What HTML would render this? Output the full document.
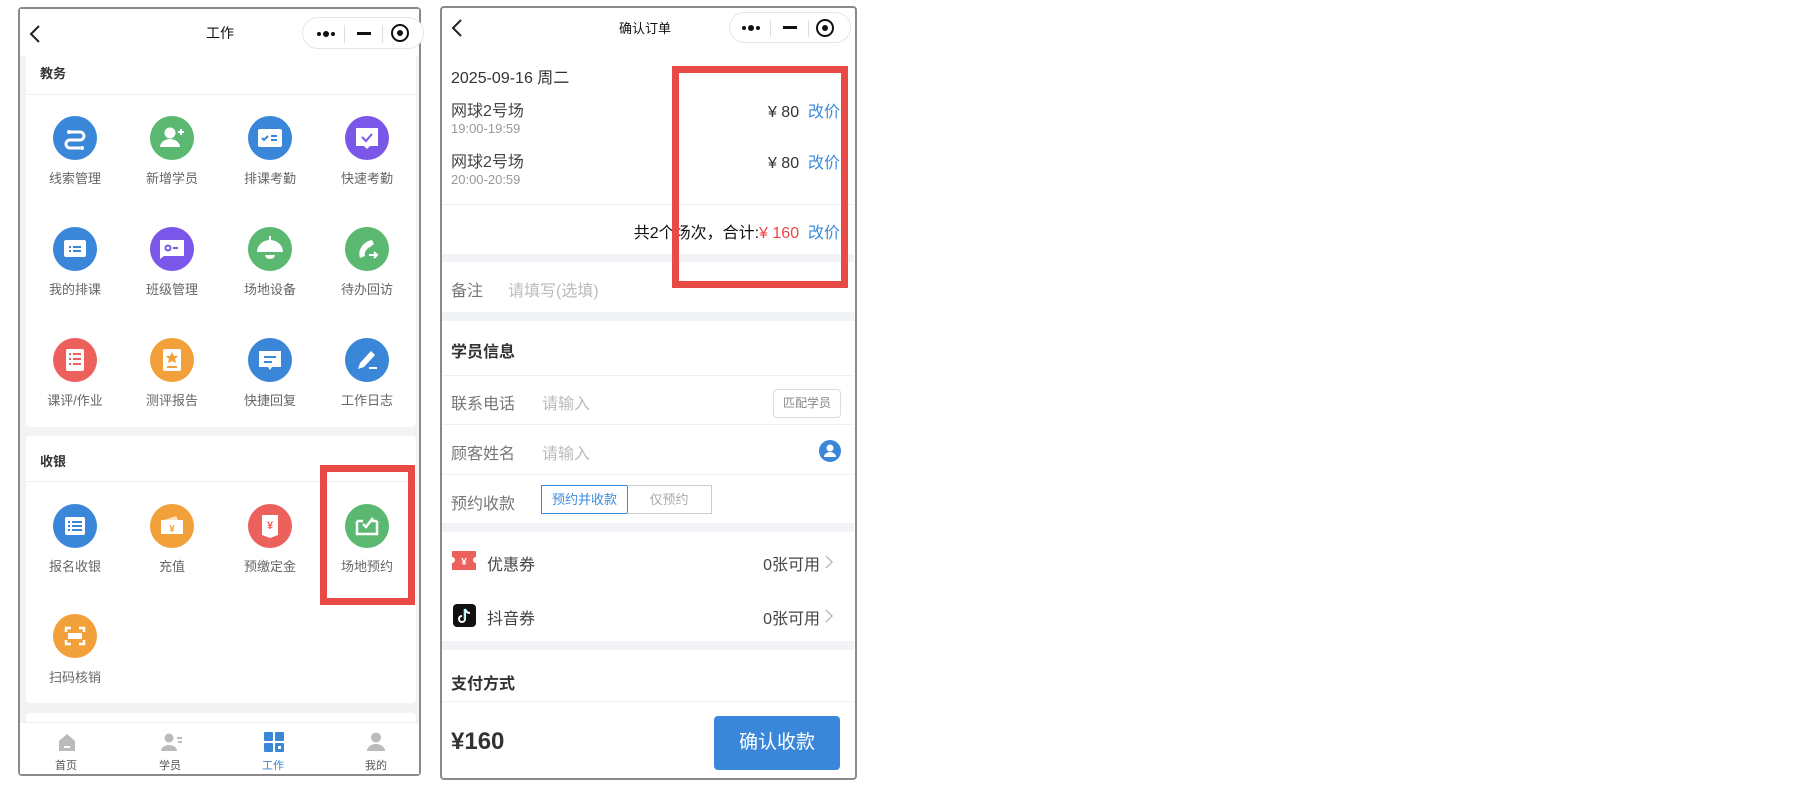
<!DOCTYPE html>
<html><head><meta charset="utf-8"><style>
*{margin:0;padding:0;box-sizing:border-box}
body{width:1820px;height:792px;background:#fff;position:relative;overflow:hidden;font-family:"Liberation Sans","Noto Sans CJK SC",sans-serif;color:#333}
.a{position:absolute}
.ph{position:absolute;border:2px solid #8a8a8a;border-radius:4px;background:#fff;overflow:hidden}
.cap{position:absolute;border:1px solid #e6e6e6;border-radius:16px;background:#fff}
.cap .d{position:absolute;top:13px;width:5px;height:5px;border-radius:50%;background:#111}
.lbl{position:absolute;width:96px;text-align:center;font-size:13px;color:#666;line-height:16px}
.ic{position:absolute;width:44px;height:44px;border-radius:50%}
.ic svg{position:absolute;left:0;top:0}
.row{position:absolute;left:451px;font-size:16px;color:#666}
.ln{position:absolute;left:442px;width:412px;height:1px;background:#f0f0f0}
.band{position:absolute;left:442px;width:412px;background:#f2f3f7}
.blue{color:#3b8bdb}
</style></head><body>

<!-- LEFT PHONE -->
<div class="ph" style="left:18px;top:7px;width:403px;height:769px;background:#f3f3f3">
</div>
<div class="a" style="left:20px;top:9px;width:399px;height:47px;background:#fff"></div>
<svg class="a" style="left:28px;top:24px" width="14" height="20"><path d="M11 2 L3 10 L11 18" stroke="#222" stroke-width="2" fill="none"/></svg>
<div class="a" style="left:190px;top:23px;width:60px;font-size:14px;color:#111;text-align:center">工作</div>
<div class="cap" style="left:302px;top:17px;width:122px;height:32px">
 <div class="d" style="left:14px;width:4px;height:4px;top:14px"></div><div class="d" style="left:20px;width:6px;height:6px;top:13px"></div><div class="d" style="left:28px;width:4px;height:4px;top:14px"></div>
 <div class="a" style="left:41px;top:7px;width:1px;height:18px;background:#ddd"></div>
 <div class="a" style="left:54px;top:14px;width:14px;height:3px;background:#111"></div>
 <div class="a" style="left:79px;top:7px;width:1px;height:18px;background:#ddd"></div>
 <div class="a" style="left:88px;top:6px;width:18px;height:18px;border:2px solid #111;border-radius:50%"></div>
 <div class="a" style="left:94px;top:12px;width:6px;height:6px;background:#111;border-radius:50%"></div>
</div>

<!-- card 1 -->
<div class="a" style="left:26px;top:56px;width:390px;height:371px;background:#fff;border-radius:0 0 4px 4px"></div>
<div class="a" style="left:40px;top:63px;font-size:13px;font-weight:bold;color:#333">教务</div>
<div class="a" style="left:26px;top:94px;width:390px;height:1px;background:#f0f0f0"></div>

<!-- icons row1 -->
<div class="ic" style="left:53px;top:116px;background:#3a86d8"><svg width="44" height="44"><path d="M17 16 H27 a4 4 0 0 1 0 8 H17 a4 4 0 0 0 0 8 H27" stroke="#fff" stroke-width="3" fill="none"/><circle cx="16" cy="16" r="2" fill="#fff"/><circle cx="29" cy="32" r="2" fill="#fff"/></svg></div>
<div class="ic" style="left:150px;top:116px;background:#5bb870"><svg width="44" height="44"><circle cx="20" cy="17" r="5.5" fill="#fff"/><path d="M10 31 a10 8 0 0 1 20 0 Z" fill="#fff"/><path d="M31 13 v6 M28 16 h6" stroke="#fff" stroke-width="2"/></svg></div>
<div class="ic" style="left:248px;top:116px;background:#3a86d8"><svg width="44" height="44"><rect x="10" y="13" width="24" height="18" rx="2" fill="#fff"/><path d="M14 22 l2 2 l4 -4" stroke="#3a86d8" stroke-width="2" fill="none"/><path d="M23 20 h6 M23 24 h6" stroke="#3a86d8" stroke-width="2"/></svg></div>
<div class="ic" style="left:345px;top:116px;background:#7a57e8"><svg width="44" height="44"><path d="M11 12 h22 v18 h-8 l-3 3 l-3 -3 h-8Z" fill="#fff"/><path d="M17 21 l4 4 l6 -7" stroke="#7a57e8" stroke-width="2" fill="none"/></svg></div>
<div class="lbl" style="left:27px;top:171px">线索管理</div>
<div class="lbl" style="left:124px;top:171px">新增学员</div>
<div class="lbl" style="left:222px;top:171px">排课考勤</div>
<div class="lbl" style="left:319px;top:171px">快速考勤</div>

<!-- row2 -->
<div class="ic" style="left:53px;top:227px;background:#3a86d8"><svg width="44" height="44"><rect x="11" y="13" width="22" height="17" rx="2" fill="#fff"/><path d="M16 20 h2 M20 20 h8 M16 24 h2 M20 24 h8" stroke="#3a86d8" stroke-width="2"/></svg></div>
<div class="ic" style="left:150px;top:227px;background:#7a57e8"><svg width="44" height="44"><path d="M10 13 h24 v16 h-20 l-4 3Z" fill="#fff"/><circle cx="18" cy="21" r="2.5" stroke="#7a57e8" stroke-width="2" fill="none"/><path d="M23 21 h5" stroke="#7a57e8" stroke-width="2"/></svg></div>
<div class="ic" style="left:248px;top:227px;background:#5bb870"><svg width="44" height="44"><path d="M9 25 a13 12 0 0 1 26 0Z" fill="#fff"/><rect x="21" y="9" width="2" height="5" fill="#fff"/><path d="M17 28 a5 4 0 0 0 10 0Z" fill="#fff"/></svg></div>
<div class="ic" style="left:345px;top:227px;background:#5bb870"><svg width="44" height="44"><path d="M15 31 c-3 -8 4 -17 12 -18 l2 4 l-4 3 c-4 2 -6 6 -5 9Z" fill="#fff"/><path d="M24 28 h8 M29 25 l3 3 l-3 3" stroke="#fff" stroke-width="2" fill="none"/></svg></div>
<div class="lbl" style="left:27px;top:282px">我的排课</div>
<div class="lbl" style="left:124px;top:282px">班级管理</div>
<div class="lbl" style="left:222px;top:282px">场地设备</div>
<div class="lbl" style="left:319px;top:282px">待办回访</div>

<!-- row3 -->
<div class="ic" style="left:53px;top:338px;background:#ec615b"><svg width="44" height="44"><rect x="13" y="11" width="18" height="22" rx="2" fill="#fff"/><path d="M16 16 h2 M20 16 h8 M16 21 h2 M20 21 h8 M16 26 h2 M20 26 h8" stroke="#ec615b" stroke-width="2"/></svg></div>
<div class="ic" style="left:150px;top:338px;background:#f2a03a"><svg width="44" height="44"><rect x="13" y="11" width="18" height="22" rx="2" fill="#fff"/><path d="M22 14 l2 4 h4 l-3 3 l1 4 l-4 -2 l-4 2 l1 -4 l-3 -3 h4Z" fill="#f2a03a"/><path d="M17 29 h10" stroke="#f2a03a" stroke-width="2"/></svg></div>
<div class="ic" style="left:248px;top:338px;background:#3a86d8"><svg width="44" height="44"><path d="M11 13 h22 v16 h-9 l-2 3 l-2 -3 h-9Z" fill="#fff"/><path d="M16 19 h12 M16 24 h8" stroke="#3a86d8" stroke-width="2"/></svg></div>
<div class="ic" style="left:345px;top:338px;background:#3a86d8"><svg width="44" height="44"><path d="M13 31 l2 -6 l11 -12 l4 4 l-11 12Z" fill="#fff"/><path d="M24 30 h8" stroke="#fff" stroke-width="2"/></svg></div>
<div class="lbl" style="left:27px;top:393px">课评/作业</div>
<div class="lbl" style="left:124px;top:393px">测评报告</div>
<div class="lbl" style="left:222px;top:393px">快捷回复</div>
<div class="lbl" style="left:319px;top:393px">工作日志</div>

<!-- card 2 -->
<div class="a" style="left:26px;top:436px;width:390px;height:267px;background:#fff;border-radius:4px"></div>
<div class="a" style="left:40px;top:451px;font-size:13px;font-weight:bold;color:#333">收银</div>
<div class="a" style="left:26px;top:481px;width:390px;height:1px;background:#f0f0f0"></div>
<div class="ic" style="left:53px;top:504px;background:#3a86d8"><svg width="44" height="44"><rect x="12" y="13" width="20" height="18" rx="2" fill="#fff"/><path d="M15 18 h2 M19 18 h10 M15 22 h2 M19 22 h10 M15 26 h2 M19 26 h10" stroke="#3a86d8" stroke-width="2"/></svg></div>
<div class="ic" style="left:150px;top:504px;background:#f2a03a"><svg width="44" height="44"><path d="M11 16 h22 v14 h-22Z" fill="#fff"/><path d="M14 16 l12 -4 l2 4" fill="#fde3b8"/><text x="22" y="28" font-size="10" fill="#f2a03a" text-anchor="middle" font-weight="bold">¥</text></svg></div>
<div class="ic" style="left:248px;top:504px;background:#ec615b"><svg width="44" height="44"><path d="M14 11 h16 v20 l-8 3 l-8 -3Z" fill="#fff"/><text x="22" y="25" font-size="11" fill="#ec615b" text-anchor="middle" font-weight="bold">¥</text></svg></div>
<div class="ic" style="left:345px;top:504px;background:#5bb870"><svg width="44" height="44"><path d="M12 17 h6 M26 17 h6 M12 17 v13 h20 v-13" stroke="#fff" stroke-width="2.5" fill="none"/><path d="M18 20 l3 3 l7 -9" stroke="#fff" stroke-width="2.5" fill="none"/></svg></div>
<div class="lbl" style="left:27px;top:559px">报名收银</div>
<div class="lbl" style="left:124px;top:559px">充值</div>
<div class="lbl" style="left:222px;top:559px">预缴定金</div>
<div class="lbl" style="left:319px;top:559px">场地预约</div>
<div class="ic" style="left:53px;top:614px;background:#f2a03a"><svg width="44" height="44"><path d="M13 18 v-4 h5 M26 14 h5 v4 M31 26 v4 h-5 M18 30 h-5 v-4" stroke="#fff" stroke-width="2.5" fill="none"/><rect x="15" y="19" width="14" height="6" fill="#fff"/></svg></div>
<div class="lbl" style="left:27px;top:670px">扫码核销</div>
<div class="a" style="left:26px;top:713px;width:390px;height:12px;background:#fff;border-radius:4px 4px 0 0"></div>
<div class="a" style="left:320px;top:465px;width:95px;height:140px;border:7px solid #e84a45"></div>

<!-- tab bar -->
<div class="a" style="left:20px;top:722px;width:399px;height:52px;background:#fff;border-top:1px solid #eee"></div>
<svg class="a" style="left:57px;top:732px" width="20" height="20"><path d="M2 9 L10 2 L18 9 V19 H2Z" fill="#bbb"/><rect x="7" y="14" width="6" height="2" fill="#fff"/></svg>
<svg class="a" style="left:160px;top:732px" width="24" height="20"><circle cx="9" cy="6" r="4.5" fill="#bbb"/><path d="M1 19 a8 6 0 0 1 16 0Z" fill="#bbb"/><path d="M17 6 h5 M18 10 h4" stroke="#bbb" stroke-width="2"/></svg>
<svg class="a" style="left:264px;top:732px" width="20" height="20"><rect x="0" y="0" width="9" height="9" rx="1" fill="#3a86d8"/><rect x="11" y="0" width="9" height="9" rx="1" fill="#3a86d8"/><rect x="0" y="11" width="9" height="9" rx="1" fill="#3a86d8"/><rect x="11" y="11" width="9" height="9" rx="1" fill="#3a86d8"/><rect x="14" y="14" width="3" height="3" fill="#fff"/></svg>
<svg class="a" style="left:366px;top:732px" width="20" height="20"><circle cx="10" cy="5.5" r="5" fill="#bbb"/><path d="M1 19 a9 7 0 0 1 18 0Z" fill="#bbb"/></svg>
<div class="a" style="left:36px;top:757px;width:60px;text-align:center;font-size:11px;color:#555">首页</div>
<div class="a" style="left:140px;top:757px;width:60px;text-align:center;font-size:11px;color:#555">学员</div>
<div class="a" style="left:243px;top:757px;width:60px;text-align:center;font-size:11px;color:#3a86d8">工作</div>
<div class="a" style="left:346px;top:757px;width:60px;text-align:center;font-size:11px;color:#555">我的</div>

<!-- RIGHT PHONE -->
<div class="ph" style="left:440px;top:6px;width:417px;height:774px"></div>
<svg class="a" style="left:450px;top:18px" width="14" height="20"><path d="M11 2 L3 10 L11 18" stroke="#222" stroke-width="2" fill="none"/></svg>
<div class="a" style="left:605px;top:18px;width:80px;font-size:13px;color:#111;text-align:center">确认订单</div>
<div class="cap" style="left:729px;top:12px;width:122px;height:31px">
 <div class="d" style="left:12px;width:4px;height:4px;top:13px"></div><div class="d" style="left:18px;width:6px;height:6px;top:12px"></div><div class="d" style="left:26px;width:4px;height:4px;top:13px"></div>
 <div class="a" style="left:40px;top:7px;width:1px;height:17px;background:#ddd"></div>
 <div class="a" style="left:53px;top:13px;width:14px;height:3px;background:#111"></div>
 <div class="a" style="left:78px;top:7px;width:1px;height:17px;background:#ddd"></div>
 <div class="a" style="left:86px;top:6px;width:18px;height:18px;border:2px solid #111;border-radius:50%"></div>
 <div class="a" style="left:92px;top:12px;width:6px;height:6px;background:#111;border-radius:50%"></div>
</div>

<div class="a" style="left:451px;top:64px;font-size:16px;color:#333">2025-09-16 周二</div>
<div class="a" style="left:451px;top:97px;font-size:16px;color:#444">网球2号场</div>
<div class="a" style="left:451px;top:121px;font-size:13px;color:#999">19:00-19:59</div>
<div class="a" style="left:451px;top:148px;font-size:16px;color:#444">网球2号场</div>
<div class="a" style="left:451px;top:172px;font-size:13px;color:#999">20:00-20:59</div>
<div class="a" style="left:700px;top:98px;width:140px;text-align:right;font-size:16px;color:#333">¥ 80 &nbsp;<span class="blue">改价</span></div>
<div class="a" style="left:700px;top:149px;width:140px;text-align:right;font-size:16px;color:#333">¥ 80 &nbsp;<span class="blue">改价</span></div>
<div class="ln" style="top:204px"></div>
<div class="a" style="left:560px;top:219px;width:280px;text-align:right;font-size:16px;color:#111">共2个场次，合计:<span style="color:#ee4444">¥ 160</span> &nbsp;<span class="blue">改价</span></div>
<div class="band" style="top:254px;height:8px"></div>
<div class="a" style="left:451px;top:277px;font-size:16px;color:#777">备注</div>
<div class="a" style="left:508px;top:277px;font-size:16px;color:#bbb">请填写(选填)</div>
<div class="band" style="top:312px;height:9px"></div>
<div class="a" style="left:451px;top:338px;font-size:16px;font-weight:bold;color:#333">学员信息</div>
<div class="ln" style="top:375px"></div>
<div class="a" style="left:451px;top:390px;font-size:16px;color:#777">联系电话</div>
<div class="a" style="left:542px;top:390px;font-size:16px;color:#bbb">请输入</div>
<div class="a" style="left:773px;top:389px;width:68px;height:29px;border:1px solid #ddd;border-radius:4px;font-size:12px;color:#888;text-align:center;line-height:27px">匹配学员</div>
<div class="ln" style="top:424px"></div>
<div class="a" style="left:451px;top:440px;font-size:16px;color:#777">顾客姓名</div>
<div class="a" style="left:542px;top:440px;font-size:16px;color:#bbb">请输入</div>
<svg class="a" style="left:818px;top:439px" width="24" height="24"><circle cx="12" cy="12" r="11" fill="#3a86d8"/><circle cx="12" cy="9" r="3.5" fill="#fff"/><path d="M6 18 a6 5 0 0 1 12 0Z" fill="#fff"/></svg>
<div class="ln" style="top:474px"></div>
<div class="a" style="left:451px;top:490px;font-size:16px;color:#777">预约收款</div>
<div class="a" style="left:541px;top:485px;width:87px;height:29px;border:1px solid #3b8bdb;font-size:13px;color:#3b8bdb;text-align:center;line-height:27px">预约并收款</div>
<div class="a" style="left:627px;top:485px;width:85px;height:29px;border:1px solid #ccc;border-left:none;font-size:13px;color:#aaa;text-align:center;line-height:27px">仅预约</div>
<div class="band" style="top:523px;height:9px"></div>
<svg class="a" style="left:452px;top:551px" width="24" height="19"><path d="M0 0 h24 v6 a3 3 0 0 0 0 6 v7 h-24 v-7 a3 3 0 0 0 0 -6Z" fill="#ec615b"/><text x="12" y="14" font-size="10" fill="#fff" text-anchor="middle" font-weight="bold">¥</text></svg>
<div class="a" style="left:487px;top:551px;font-size:16px;color:#444">优惠券</div>
<div class="a" style="left:720px;top:551px;width:100px;text-align:right;font-size:16px;color:#444">0张可用</div>
<svg class="a" style="left:824px;top:554px" width="10" height="16"><path d="M2 2 L8 8 L2 14" stroke="#bbb" stroke-width="1.5" fill="none"/></svg>
<div class="a" style="left:453px;top:604px;width:23px;height:23px;background:#111;border-radius:4px"></div>
<svg class="a" style="left:453px;top:604px" width="23" height="23"><path d="M12 5 v10 a3 3 0 1 1 -3 -3" stroke="#fff" stroke-width="2" fill="none"/><path d="M12 5 c1 3 3 4 5 4" stroke="#fff" stroke-width="2" fill="none"/><path d="M11 5 v10" stroke="#25f4ee" stroke-width="0.8"/></svg>
<div class="a" style="left:487px;top:605px;font-size:16px;color:#444">抖音券</div>
<div class="a" style="left:720px;top:605px;width:100px;text-align:right;font-size:16px;color:#444">0张可用</div>
<svg class="a" style="left:824px;top:608px" width="10" height="16"><path d="M2 2 L8 8 L2 14" stroke="#bbb" stroke-width="1.5" fill="none"/></svg>
<div class="band" style="top:641px;height:9px"></div>
<div class="a" style="left:451px;top:670px;font-size:16px;font-weight:bold;color:#333">支付方式</div>
<div class="ln" style="top:701px"></div>
<div class="a" style="left:451px;top:728px;font-size:24px;font-weight:bold;color:#333">¥160</div>
<div class="a" style="left:714px;top:716px;width:126px;height:54px;background:#3a86d8;border-radius:4px;color:#fff;font-size:19px;text-align:center;line-height:54px">确认收款</div>

<div class="a" style="left:672px;top:66px;width:176px;height:222px;border:7px solid #e84a45"></div>
</body></html>
